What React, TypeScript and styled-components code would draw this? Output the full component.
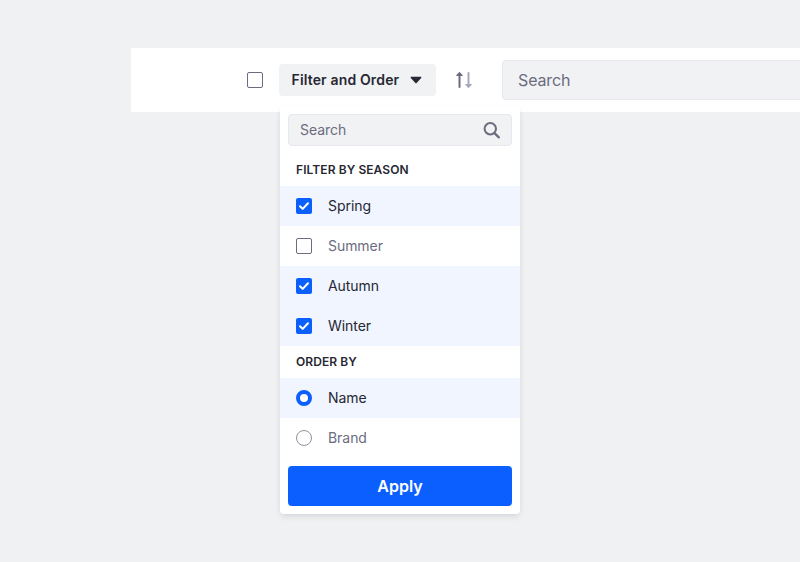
import React from 'react';
import styled, { createGlobalStyle } from 'styled-components';

const GlobalStyle = createGlobalStyle`
  *, *::before, *::after { box-sizing: border-box; }
  html, body { margin: 0; padding: 0; }
  body {
    height: 562px;
    overflow: hidden;
    background: #f0f1f3;
    font-family: Inter, "Liberation Sans", sans-serif;
    color: #272833;
  }
  button, input { font-family: inherit; }
`;

const Page = styled.main`
  height: 562px;
  padding: 48px 0 0 131px;
  overflow: hidden;
`;

const Toolbar = styled.header`
  display: flex;
  align-items: center;
  height: 64px;
  padding-left: 116px;
  background: #fff;
`;

const Dropdown = styled.div`
  position: relative;
  margin-left: 16px;
`;

const Trigger = styled.button`
  display: flex;
  align-items: center;
  justify-content: space-between;
  width: 157px;
  height: 32px;
  padding: 0 14px 0 12.5px;
  border: 0;
  border-radius: 4px;
  background: #f1f2f4;
  color: #272833;
  font-size: 14px;
  font-weight: 600;
  letter-spacing: 0.15px;
  line-height: 32px;
  white-space: nowrap;
`;

const SortButton = styled.button`
  display: flex;
  width: 18px;
  height: 18px;
  margin-left: 19px;
  padding: 0;
  border: 0;
  background: none;
`;

const Field = styled.label<{ $large?: boolean }>`
  display: flex;
  align-items: center;
  flex: ${(p) => (p.$large ? '0 0 320px' : 'none')};
  height: ${(p) => (p.$large ? 40 : 32)}px;
  margin: ${(p) => (p.$large ? '0 0 0 29px' : '0 8px 8px')};
  padding: ${(p) => (p.$large ? '0 15px' : '0 11px')};
  border: 1px solid #e7e7ed;
  border-radius: 4px;
  background: #f1f2f4;
  font-size: ${(p) => (p.$large ? 16 : 14)}px;
  letter-spacing: ${(p) => (p.$large ? '-0.14px' : '-0.05px')};
`;

const FieldInput = styled.input<{ $raised?: boolean }>`
  flex: 1;
  min-width: 0;
  padding: 0 0 ${(p) => (p.$raised ? 2 : 0)}px;
  border: 0;
  outline: 0;
  background: none;
  font-size: inherit;
  letter-spacing: inherit;
  &::placeholder { color: #6b6c7e; opacity: 1; }
`;

const Menu = styled.div`
  position: absolute;
  top: 42px;
  left: 1px;
  width: 240px;
  padding: 8px 0;
  border-radius: 4px;
  background: #fff;
  box-shadow: 0 3px 6px -1px rgba(39, 40, 51, 0.13), 0 2px 6px rgba(39, 40, 51, 0.02);
`;

const GroupTitle = styled.h2`
  margin: 0;
  padding: 0 16px;
  font-size: 12px;
  font-weight: 600;
  letter-spacing: 0.08px;
  line-height: 32px;
  text-transform: uppercase;
`;

const Option = styled.div<{ $selected?: boolean }>`
  display: flex;
  align-items: center;
  gap: 16px;
  height: 40px;
  padding: 0 16px;
  background: ${(p) => (p.$selected ? '#f0f5ff' : '#fff')};
  color: ${(p) => (p.$selected ? '#272833' : '#6b6c7e')};
  font-size: 14px;
  letter-spacing: -0.05px;
`;

const OptionLabel = styled.span`
  padding-bottom: 2px;
`;

const Check = styled.span<{ $checked?: boolean }>`
  display: flex;
  flex: none;
  width: 16px;
  height: 16px;
  border: ${(p) => (p.$checked ? '0' : '1px solid #6b6c7e')};
  border-radius: 2px;
  background: ${(p) => (p.$checked ? '#0b5fff' : '#fff')};
`;

const Radio = styled.span<{ $checked?: boolean }>`
  flex: none;
  width: 16px;
  height: 16px;
  border: ${(p) => (p.$checked ? '4px solid #0b5fff' : '1px solid #8f909e')};
  border-radius: 50%;
  background: #fff;
`;

const ApplyButton = styled.button`
  display: block;
  width: 224px;
  height: 40px;
  margin: 8px 8px 0;
  padding: 0;
  border: 0;
  border-radius: 4px;
  background: #0b5fff;
  color: #fff;
  font-size: 16px;
  font-weight: 600;
`;

const Caret = () => (
  <svg width="12" height="8" viewBox="0 0 12 8">
    <path d="M1.3.8h9.4c.6 0 .9.7.5 1.200L6.600 7.100c-.3.4-.9.4-1.200 0L.8 2C.4 1.500.7.8 1.300.8z" fill="#272833" />
  </svg>
);

const SortIcon = () => (
  <svg width="18" height="18" viewBox="0 0 18 18">
    <path d="M4.500 16V2.500" stroke="#6b6c7e" strokeWidth="2" strokeLinecap="round" />
    <path d="M4.500 1 7.600 4c.4.4.1.9-.4.9H1.800c-.5 0-.8-.5-.4-.9z" fill="#6b6c7e" />
    <path d="M13.500 2v13.500" stroke="#a7a9bc" strokeWidth="2" strokeLinecap="round" />
    <path d="m13.500 17 3.100-3c.4-.4.1-.9-.4-.9h-5.400c-.5 0-.8.5-.4.9z" fill="#a7a9bc" />
  </svg>
);

const SearchIcon = () => (
  <svg width="17" height="17" viewBox="0 0 17 17" fill="none" stroke="#6b6c7e" strokeWidth="2">
    <circle cx="7.300" cy="6.800" r="5.700" />
    <path d="m11.500 11.100 4.300 4.300" strokeWidth="2.200" strokeLinecap="round" />
  </svg>
);

const Tick = () => (
  <svg width="16" height="16" viewBox="0 0 16 16" fill="none">
    <path d="m4 8.300 2.700 2.600L12 5.300" stroke="#fff" strokeWidth="2" strokeLinecap="round" strokeLinejoin="round" />
  </svg>
);

const seasons = [
  { label: 'Spring', checked: true },
  { label: 'Summer', checked: false },
  { label: 'Autumn', checked: true },
  { label: 'Winter', checked: true },
];

const orders = [
  { label: 'Name', checked: true },
  { label: 'Brand', checked: false },
];

export default function App() {
  return (
    <>
      <GlobalStyle />
      <Page>
        <Toolbar>
          <Check />
          <Dropdown>
            <Trigger>
              Filter and Order
              <Caret />
            </Trigger>
            <Menu>
              <Field>
                <FieldInput $raised placeholder="Search" />
                <SearchIcon />
              </Field>
              <GroupTitle>Filter by season</GroupTitle>
              {seasons.map((s) => (
                <Option key={s.label} $selected={s.checked}>
                  <Check $checked={s.checked}>{s.checked && <Tick />}</Check>
                  <OptionLabel>{s.label}</OptionLabel>
                </Option>
              ))}
              <GroupTitle>Order by</GroupTitle>
              {orders.map((o) => (
                <Option key={o.label} $selected={o.checked}>
                  <Radio $checked={o.checked} />
                  <OptionLabel>{o.label}</OptionLabel>
                </Option>
              ))}
              <ApplyButton>Apply</ApplyButton>
            </Menu>
          </Dropdown>
          <SortButton aria-label="Reverse order">
            <SortIcon />
          </SortButton>
          <Field $large>
            <FieldInput placeholder="Search" />
          </Field>
        </Toolbar>
      </Page>
    </>
  );
}
